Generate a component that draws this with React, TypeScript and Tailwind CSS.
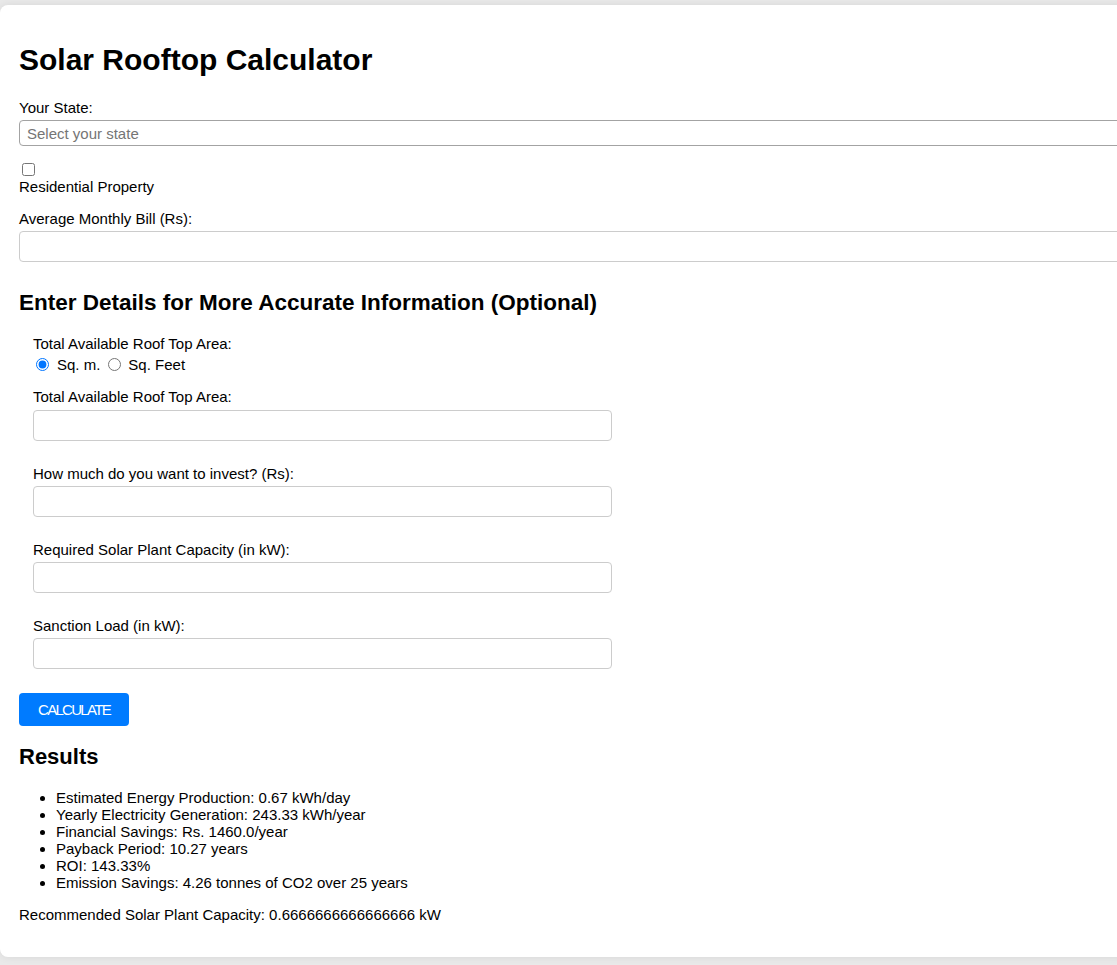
import React from "react";

const groups = [
  "Total Available Roof Top Area:",
  "How much do you want to invest? (Rs):",
  "Required Solar Plant Capacity (in kW):",
  "Sanction Load (in kW):",
];

const results = [
  "Estimated Energy Production: 0.67 kWh/day",
  "Yearly Electricity Generation: 243.33 kWh/year",
  "Financial Savings: Rs. 1460.0/year",
  "Payback Period: 10.27 years",
  "ROI: 143.33%",
  "Emission Savings: 4.26 tonnes of CO2 over 25 years",
];

export default function App() {
  return (
    <div
      className="min-h-screen w-full overflow-hidden bg-[#e9e9e9] pt-[5px] pb-[8px] text-black text-[15px] leading-[17px]"
      style={{ fontFamily: '"Liberation Sans", Arial, sans-serif' }}
    >
      <div className="w-[1160px] rounded-lg bg-white px-[19px] pt-[38px] pb-[34px] shadow-[0_0_8px_rgba(0,0,0,0.08)]">
        <h1 className="mb-[22px] text-[30px] font-bold leading-[34px]">Solar Rooftop Calculator</h1>

        <label className="block">Your State:</label>
        <select
          defaultValue=""
          className="mt-[4px] block h-[26px] w-full appearance-none rounded-[4px] border border-[#a3a3a3] bg-white px-[7px] text-[15px] text-[#757575] outline-none"
        >
          <option value="" disabled>
            Select your state
          </option>
        </select>

        <div className="mt-[17px]">
          <input type="checkbox" className="ml-[3px] mt-[3px] mb-[2px] block h-[13px] w-[13px]" />
          <div>Residential Property</div>
        </div>

        <label className="mt-[15px] block">Average Monthly Bill (Rs):</label>
        <input
          type="text"
          className="mt-[4px] block h-[31px] w-full rounded-[4px] border border-[#cccccc] px-2 outline-none"
        />

        <h2 className="mt-[28px] text-[22.5px] font-bold leading-[26px]">
          Enter Details for More Accurate Information (Optional)
        </h2>

        <div className="mt-[19px] pl-[14px]">
          <div>Total Available Roof Top Area:</div>
          <div className="mt-[2px] flex h-[20px] items-center">
            <input type="radio" name="unit" defaultChecked className="ml-[3px] h-[13px] w-[13px]" />
            <span className="ml-[8px]">Sq. m.</span>
            <input type="radio" name="unit" className="ml-[8px] h-[13px] w-[13px]" />
            <span className="ml-[7px]">Sq. Feet</span>
          </div>

          <div className="mt-[14px] flex flex-col gap-[24px]">
            {groups.map((g, i) => (
              <div key={g}>
                <label className="block">{g}</label>
                <input
                  type="text"
                  className={
                    i === 0
                      ? "mt-[5px] block h-[31px] w-[579px] rounded-[4px] border border-[#cccccc] px-2 outline-none"
                      : "mt-[4px] block h-[31px] w-[579px] rounded-[4px] border border-[#cccccc] px-2 outline-none"
                  }
                />
              </div>
            ))}
          </div>
        </div>

        <button className="mt-[24px] flex h-[33px] w-[110px] items-center justify-center rounded-[4px] bg-[#007bff] text-[15px] tracking-[-1.7px] text-white">
          CALCULATE
        </button>

        <h3 className="mt-[18px] text-[22px] font-bold leading-[25px]">Results</h3>
        <ul className="mt-[20px] list-disc pl-[37px]">
          {results.map((r) => (
            <li key={r}>{r}</li>
          ))}
        </ul>
        <p className="mt-[15px]">Recommended Solar Plant Capacity: 0.6666666666666666 kW</p>
      </div>
    </div>
  );
}
